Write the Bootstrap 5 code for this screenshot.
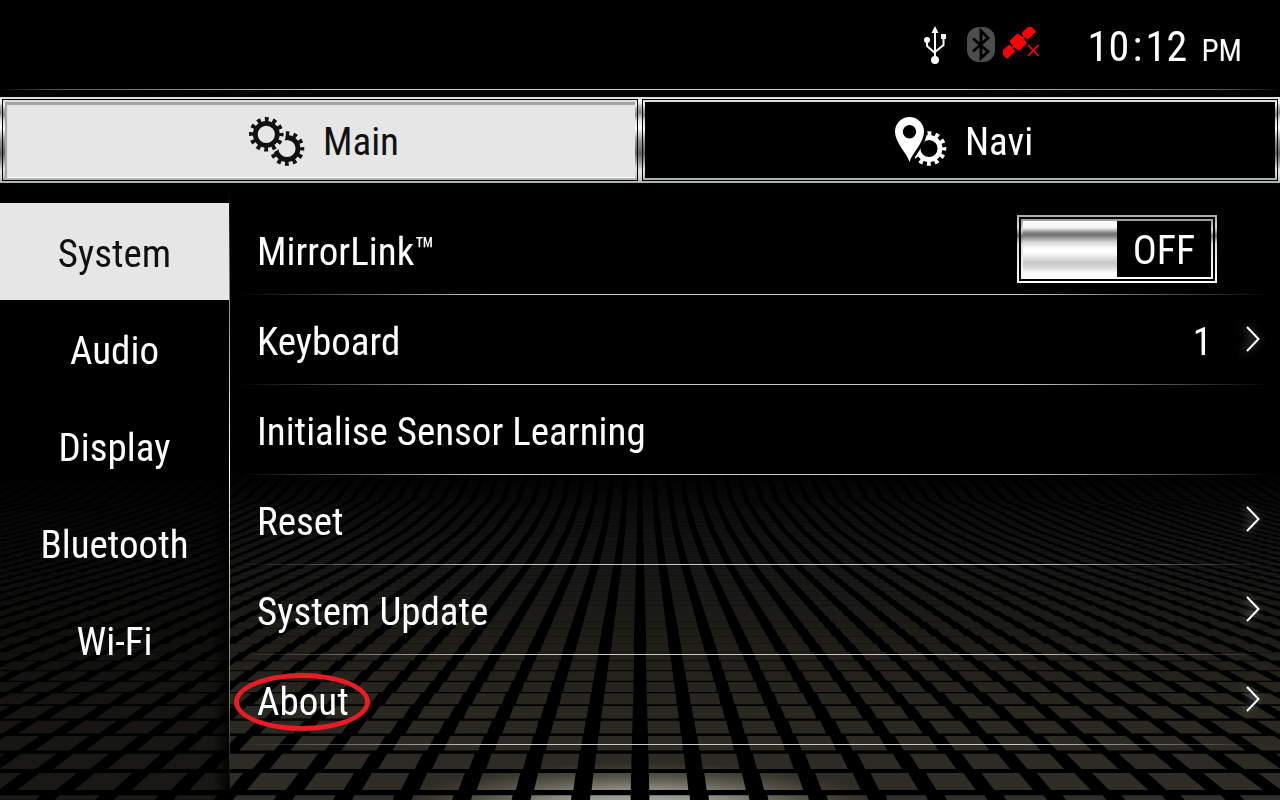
<!DOCTYPE html>
<html lang="en">
<head>
<meta charset="utf-8">
<meta name="viewport" content="width=device-width, initial-scale=1">
<title>Settings</title>
<link href="https://cdn.jsdelivr.net/npm/bootstrap@5.3.0/dist/css/bootstrap.min.css" rel="stylesheet">
<style>
:root{
  --plate:#e6e6e6;
  --metal:linear-gradient(#d8dad8 0,#f4f4f4 6%,#b4b4b4 11%,#8a8a8a 18%,#e4e4e4 27%,#fff 36%,#9a9a9a 50%,#646464 66%,#a0a0a0 77%,#e8e8e8 86%,#c4ccc6 95%,#a8aaa8 100%);
}
body{background:#000;color:#fff;font-family:"Roboto Condensed","Noto Sans",sans-serif;font-size:39px;line-height:56px}
.floor{position:fixed;left:0;bottom:0;width:100%;z-index:-1;display:block}
.status{height:90px;padding-right:38px}
.status-icons{margin-right:48px}
.status::after,.setting::after{content:"";position:absolute;left:0;right:0;bottom:0;height:1px;background:linear-gradient(90deg,transparent 0,#555 4%,#c8c8c8 25%,#c8c8c8 75%,#555 96%,transparent)}
.clock{font-size:42px;padding-top:8px}
.clock-digit{width:21px;text-align:center}
.clock-colon{width:16px;text-align:center}
.meridiem{font-size:31px;margin-left:14px}
.tabs{margin-top:7px}
.tab-btn{background:var(--metal);border:0;padding:2px;color:#fff;height:86px}
.tab-rim{border:1px solid #000;background:var(--metal);padding:2px;height:100%}
.tab-face{background:#000;height:100%;gap:18px;padding:4px 0 0 8px}
.tab-btn.active{color:#111}
.tab-btn.active .tab-face{background:var(--plate);box-shadow:inset 2px 3px 1px #a2a2a2,inset 0 -1px 0 #fff}
.side{width:230px;padding-top:20px;background:linear-gradient(90deg,transparent 92%,rgba(0,0,0,.85)),rgba(0,0,0,.46)}
.side::after{content:"";position:absolute;top:8px;right:0;bottom:8px;width:1px;background:linear-gradient(transparent,#77806a 15%,#fff 45%,#c8ccb8 60%,#6d7058 85%,transparent)}
.side .nav-link{color:#fff;height:97px;padding:4px 0 0;border-radius:0;margin-right:1px;display:flex;align-items:center;justify-content:center}
.side .nav-link.active{background:var(--plate);color:#111}
.settings{padding-top:22px}
.setting{background:none;border:0;border-radius:0;color:#fff;height:90px;padding:4px 20px 0 27px;text-align:left}
.setting::after{left:10px;right:10px;background:linear-gradient(90deg,transparent 0,#c8c8c8 24%,#c8c8c8 76%,transparent)}
.setting .chev{margin-left:34px;margin-bottom:6px;filter:drop-shadow(-2px 0 4px rgba(255,255,255,.5))}
.toggle{width:200px;height:68px;margin:0 43px 6px 0;padding:2px;background:linear-gradient(#aaa 0,#ddd 18%,#666 30%,#ddd 42%,#fff);cursor:pointer}
.toggle-gap{background:#000;padding:2px;width:100%}
.toggle-rim{background:linear-gradient(#999 0,#ddd 18%,#777 28%,#ddd 42%,#fff);padding:2px;width:100%}
.toggle-knob{width:94px;background:linear-gradient(#fff 0,#f4f4f4 12%,#777 22%,#777 26%,#d8d8d8 38%,#fff 50%,#fff 56%,#c8c8c8 74%,#d0d0d0 80%,#fff 94%)}
.toggle-text{background:#000;font-size:40px;padding-top:3px}
.ring{position:absolute;left:-23px;top:-1px;width:136px;height:58px;border:5px solid #ed1c24;border-radius:50%}
</style>
</head>
<body>
<svg class="floor" viewBox="0 0 1280 330" aria-hidden="true">
  <defs>
    <linearGradient id="fade" gradientUnits="userSpaceOnUse" x1="0" y1="0" x2="0" y2="330">
      <stop offset="0" stop-color="#000"/><stop offset=".13" stop-color="#0e0e0e"/><stop offset=".28" stop-color="#161615"/><stop offset=".5" stop-color="#1d1c17"/><stop offset=".7" stop-color="#27261f"/><stop offset="1" stop-color="#302e28"/>
    </linearGradient>
    <radialGradient id="spot" gradientUnits="userSpaceOnUse" cx="0" cy="0" r="1" gradientTransform="translate(640 336) scale(240 44)">
      <stop offset="0" stop-color="#b0b0b0"/><stop offset=".4" stop-color="#a0a094" stop-opacity=".8"/><stop offset=".8" stop-color="#6c6c58" stop-opacity=".35"/><stop offset="1" stop-color="#55553f" stop-opacity="0"/>
    </radialGradient>
  </defs>
  <path id="tiles" fill="url(#fade)"/>
  <path id="shine" fill="url(#spot)"/>
</svg>

<div class="d-flex flex-column min-vh-100">
  <header class="status position-relative d-flex align-items-center justify-content-end flex-shrink-0">
    <div class="status-icons d-flex align-items-center">
      <svg width="24" height="38" viewBox="-1 0 24 38" fill="none" stroke="#fff" stroke-width="2" role="img" aria-label="USB"><path d="M11 4V34M3 14V20L11 27M19.500 11V19L11 26"/><path d="M11 0L14.500 7H7.500ZM17 8h5v5h-5z" fill="#fff" stroke="none"/><circle cx="3" cy="14" r="3" fill="#fff" stroke="none"/><circle cx="11" cy="34" r="4" fill="#fff" stroke="none"/></svg>
      <svg class="ms-3 me-1" width="36" height="36" viewBox="0 0 36 36" role="img" aria-label="Bluetooth"><rect x="4" y="0" width="28" height="35" rx="12" fill="#4d4d4d"/><path d="M10 11.500L25 24.500L18 31V4L25 11L10 24.500" fill="none" stroke="#000" stroke-width="2.800"/></svg>
      <svg width="36" height="36" viewBox="0 -1 36 36" fill="#f00" role="img" aria-label="No satellite signal"><g transform="translate(15.500 14) rotate(-43)"><rect x="-20" y="-4.500" width="11.500" height="9" rx="1"/><rect x="8" y="-4.500" width="12" height="9" rx="1"/><rect x="-6.500" y="-7" width="12.500" height="14" rx="3"/><path d="M-9 -1H9V1H-9Z"/></g><path d="M25 17L35.500 28M35.500 17L25 28" stroke="#f00" stroke-width="1.800"/></svg>
    </div>
    <div class="clock d-flex align-items-baseline"><time class="d-flex" datetime="22:12"><span class="clock-digit">1</span><span class="clock-digit">0</span><span class="clock-colon">:</span><span class="clock-digit">1</span><span class="clock-digit">2</span></time><span class="meridiem">PM</span></div>
  </header>

  <div class="tabs d-flex" role="tablist">
    <button type="button" class="tab-btn active flex-fill w-50" role="tab" aria-selected="true"><span class="tab-rim d-block"><span class="tab-face d-flex align-items-center justify-content-center">
      <svg width="56" height="50" viewBox="0 0 56 50" fill="none" stroke="currentColor" aria-hidden="true">
        <mask id="cutGear"><rect width="56" height="50" fill="#fff" stroke="none"/><circle cx="17.300" cy="17.300" r="19.500" fill="#000" stroke="none"/></mask>
        <g stroke-width="4.800"><circle cx="17.300" cy="17.300" r="11"/><circle cx="17.300" cy="17.300" r="14.900" stroke-dasharray="3.800 4" stroke-dashoffset="1.900"/></g>
        <g stroke-width="4.800" mask="url(#cutGear)"><circle cx="38" cy="31.500" r="11"/><circle cx="38" cy="31.500" r="14.900" stroke-dasharray="3.800 4" stroke-dashoffset="1.900"/></g>
      </svg><span>Main</span></span></span></button>
    <button type="button" class="tab-btn flex-fill w-50" role="tab" aria-selected="false"><span class="tab-rim d-block"><span class="tab-face d-flex align-items-center justify-content-center">
      <svg width="52" height="50" viewBox="0 0 52 50" aria-hidden="true">
        <mask id="cutPin"><rect width="52" height="50" fill="#fff"/><path d="M14.500 45C12 36 0 26 0 14.500A14.500 14.500 0 0 1 29 14.500C29 26 17 36 14.500 45Z" fill="#000" stroke="#000" stroke-width="6"/></mask>
        <path fill="currentColor" fill-rule="evenodd" d="M14.500 45C12 36 0 26 0 14.500A14.500 14.500 0 0 1 29 14.500C29 26 17 36 14.500 45ZM14.500 8A6.700 6.700 0 1 0 14.500 21.400A6.700 6.700 0 1 0 14.500 8Z"/>
        <g fill="none" stroke="currentColor" stroke-width="4.800" mask="url(#cutPin)"><circle cx="34" cy="31.500" r="11"/><circle cx="34" cy="31.500" r="14.900" stroke-dasharray="3.800 4" stroke-dashoffset="1.900"/></g>
      </svg><span>Navi</span></span></span></button>
  </div>

  <div class="d-flex flex-grow-1">
    <nav class="side nav flex-column flex-nowrap position-relative flex-shrink-0" aria-label="Settings groups">
      <a class="nav-link active" href="#system" aria-current="page">System</a>
      <a class="nav-link" href="#audio">Audio</a>
      <a class="nav-link" href="#display">Display</a>
      <a class="nav-link" href="#bluetooth">Bluetooth</a>
      <a class="nav-link" href="#wifi">Wi-Fi</a>
    </nav>
    <main class="settings flex-grow-1 d-flex flex-column">
      <div class="setting position-relative d-flex align-items-center justify-content-between">
        <label for="mirror">MirrorLink™</label>
        <label class="toggle d-flex" for="mirror">
          <input class="visually-hidden" type="checkbox" role="switch" id="mirror">
          <span class="toggle-gap d-flex"><span class="toggle-rim d-flex"><span class="toggle-knob"></span><span class="toggle-text flex-grow-1 d-flex align-items-center justify-content-center">OFF</span></span></span>
        </label>
      </div>
      <button type="button" class="setting position-relative d-flex align-items-center"><span>Keyboard</span><span class="ms-auto">1</span><svg class="chev" width="14" height="26"><use href="#chevron"/></svg></button>
      <button type="button" class="setting position-relative d-flex align-items-center"><span>Initialise Sensor Learning</span></button>
      <button type="button" class="setting position-relative d-flex align-items-center justify-content-between"><span>Reset</span><svg class="chev" width="14" height="26"><use href="#chevron"/></svg></button>
      <button type="button" class="setting position-relative d-flex align-items-center justify-content-between"><span>System Update</span><svg class="chev" width="14" height="26"><use href="#chevron"/></svg></button>
      <button type="button" class="setting position-relative d-flex align-items-center justify-content-between"><span class="position-relative">About<span class="ring"></span></span><svg class="chev" width="14" height="26"><use href="#chevron"/></svg></button>
    </main>
  </div>
</div>

<svg width="0" height="0" class="position-absolute" aria-hidden="true"><symbol id="chevron" viewBox="0 0 14 26"><path d="M1 1L12.500 13L1 25" fill="none" stroke="#fff" stroke-width="2"/></symbol></svg>

<script src="https://cdn.jsdelivr.net/npm/bootstrap@5.3.0/dist/js/bootstrap.bundle.min.js"></script>
<script>
// Tiled floor: columns fan out from the centre line, rows get shorter towards the horizon.
const stops = [[0,14],[30,15.2],[60,18],[94,22.3],[182,35.8],[201,38.8],[303,55.4],[340,61.4]];
function pitch(y){
  for (let i = 1; i < stops.length; i++) {
    const [y0,p0] = stops[i-1], [y1,p1] = stops[i];
    if (y <= y1) return p0 + (p1 - p0) * (y - y0) / (y1 - y0);
  }
  return 61.4;
}
let tops = [325.3,303,283.7,266,250.7,236,223.3,212,201.3,191.3,182.3,174,166.3,159,152];
while (tops[tops.length-1] > 4) { const y = tops[tops.length-1], p = pitch(y); tops.push(y - 0.00685*p*p*0.88); }
let d = '', next = 350;
for (const y of tops) {
  const dy = next - y, b = next - (y > 180 ? dy*dy*0.0105 : 0.2), g = y > 180 ? 0.16 : 0.18;
  const pa = pitch(y), pb = pa + (pitch(b) - pa) * 0.75, n = Math.ceil(640/pa);
  for (let k = -n-1; k <= n; k++) {
    const q = (f,p) => (640 + (k+f)*p).toFixed(1);
    d += `M${q(g,pa)} ${y.toFixed(1)}L${q(1-g,pa)} ${y.toFixed(1)}L${q(1-g,pb)} ${b.toFixed(1)}L${q(g,pb)} ${b.toFixed(1)}Z`;
  }
  next = y;
}
document.getElementById('tiles').setAttribute('d', d);
document.getElementById('shine').setAttribute('d', d);
</script>
</body>
</html>
